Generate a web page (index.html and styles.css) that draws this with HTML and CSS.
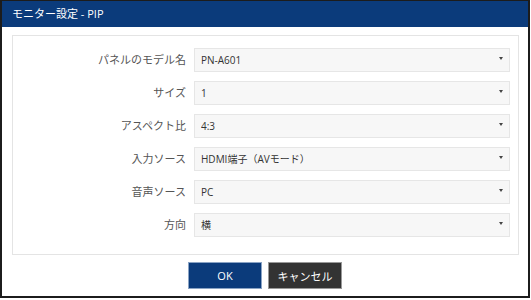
FILE: index.html
```html
<!DOCTYPE html>
<html lang="ja">
<head>
    <meta charset="UTF-8">
    <meta name="viewport" content="width=device-width, initial-scale=1.0">
    <title>モニター設定 - PIP</title>
    <link rel="stylesheet" href="styles.css">
</head>
<body>
  <div class="dialog">
      <div class="dialog-header">モニター設定 - PIP</div>
      <div class="dialog-body">
          <form class="panel" id="pipForm">
              <label for="modelName">パネルのモデル名</label>
              <div class="select"><select id="modelName"><option>PN-A601</option></select></div>

              <label for="size">サイズ</label>
              <div class="select"><select id="size"><option>1</option></select></div>

              <label for="aspect">アスペクト比</label>
              <div class="select"><select id="aspect"><option>4:3</option></select></div>

              <label for="inputSource">入力ソース</label>
              <div class="select"><select id="inputSource"><option>HDMI端子（AVモード）</option></select></div>

              <label for="audioSource">音声ソース</label>
              <div class="select"><select id="audioSource"><option>PC</option></select></div>

              <label for="direction">方向</label>
              <div class="select"><select id="direction"><option>横</option></select></div>
          </form>
      </div>
      <div class="dialog-footer">
          <button type="submit" form="pipForm" class="btn btn-ok">OK</button>
          <button type="button" class="btn btn-cancel">キャンセル</button>
      </div>
  </div>
</body>
</html>
```

FILE: styles.css
```css
body {
    font-family: "Open Sans", "Noto Sans CJK JP", sans-serif;
    margin: 0;
    padding: 0;
    background-color: #fff;
}
.dialog {
    width: 526px;
    height: 295px;
    border: 2px solid #1c1c1c;
    border-top-width: 1px;
    display: flex;
    flex-direction: column;
    background-color: #fff;
}
.dialog-header {
    height: 26px;
    line-height: 26px;
    padding-left: 10px;
    background-color: #0b3b7b;
    color: #fff;
    font-size: 11px;
}
.dialog-body {
    padding: 8px 9px 0 10px;
}
.panel {
    border: 1px solid #e4e4e4;
    padding: 11px 8px 17px 0;
    display: grid;
    grid-template-columns: 173px 1fr;
    column-gap: 8px;
    row-gap: 8px;
    align-items: center;
}
label {
    text-align: right;
    font-size: 11px;
    color: #555;
    padding-bottom: 2px;
}
.select {
    position: relative;
}
.select select {
    appearance: none;
    -webkit-appearance: none;
    width: 100%;
    height: 24px;
    padding: 0 6px;
    border: 1px solid #e6e6e6;
    border-radius: 0;
    background-color: #f7f7f7;
    font-family: "Open Sans", "Noto Sans CJK JP", sans-serif;
    font-size: 10px;
    color: #333;
    outline: none;
}
.select::after {
    content: "";
    position: absolute;
    right: 7px;
    top: 10px;
    border-left: 2px solid transparent;
    border-right: 2px solid transparent;
    border-top: 3px solid #444;
    pointer-events: none;
}
.dialog-footer {
    display: flex;
    justify-content: center;
    gap: 6px;
    padding-top: 7px;
}
.btn {
    width: 74px;
    height: 27px;
    font-family: "Open Sans", "Noto Sans CJK JP", sans-serif;
    font-size: 11px;
    color: #fff;
    cursor: pointer;
}
.btn-ok {
    background-color: #0b3b7b;
    border: 1px solid #8aa3c4;
}
.btn-cancel {
    background-color: #333;
    border: 1px solid #999;
}
```
